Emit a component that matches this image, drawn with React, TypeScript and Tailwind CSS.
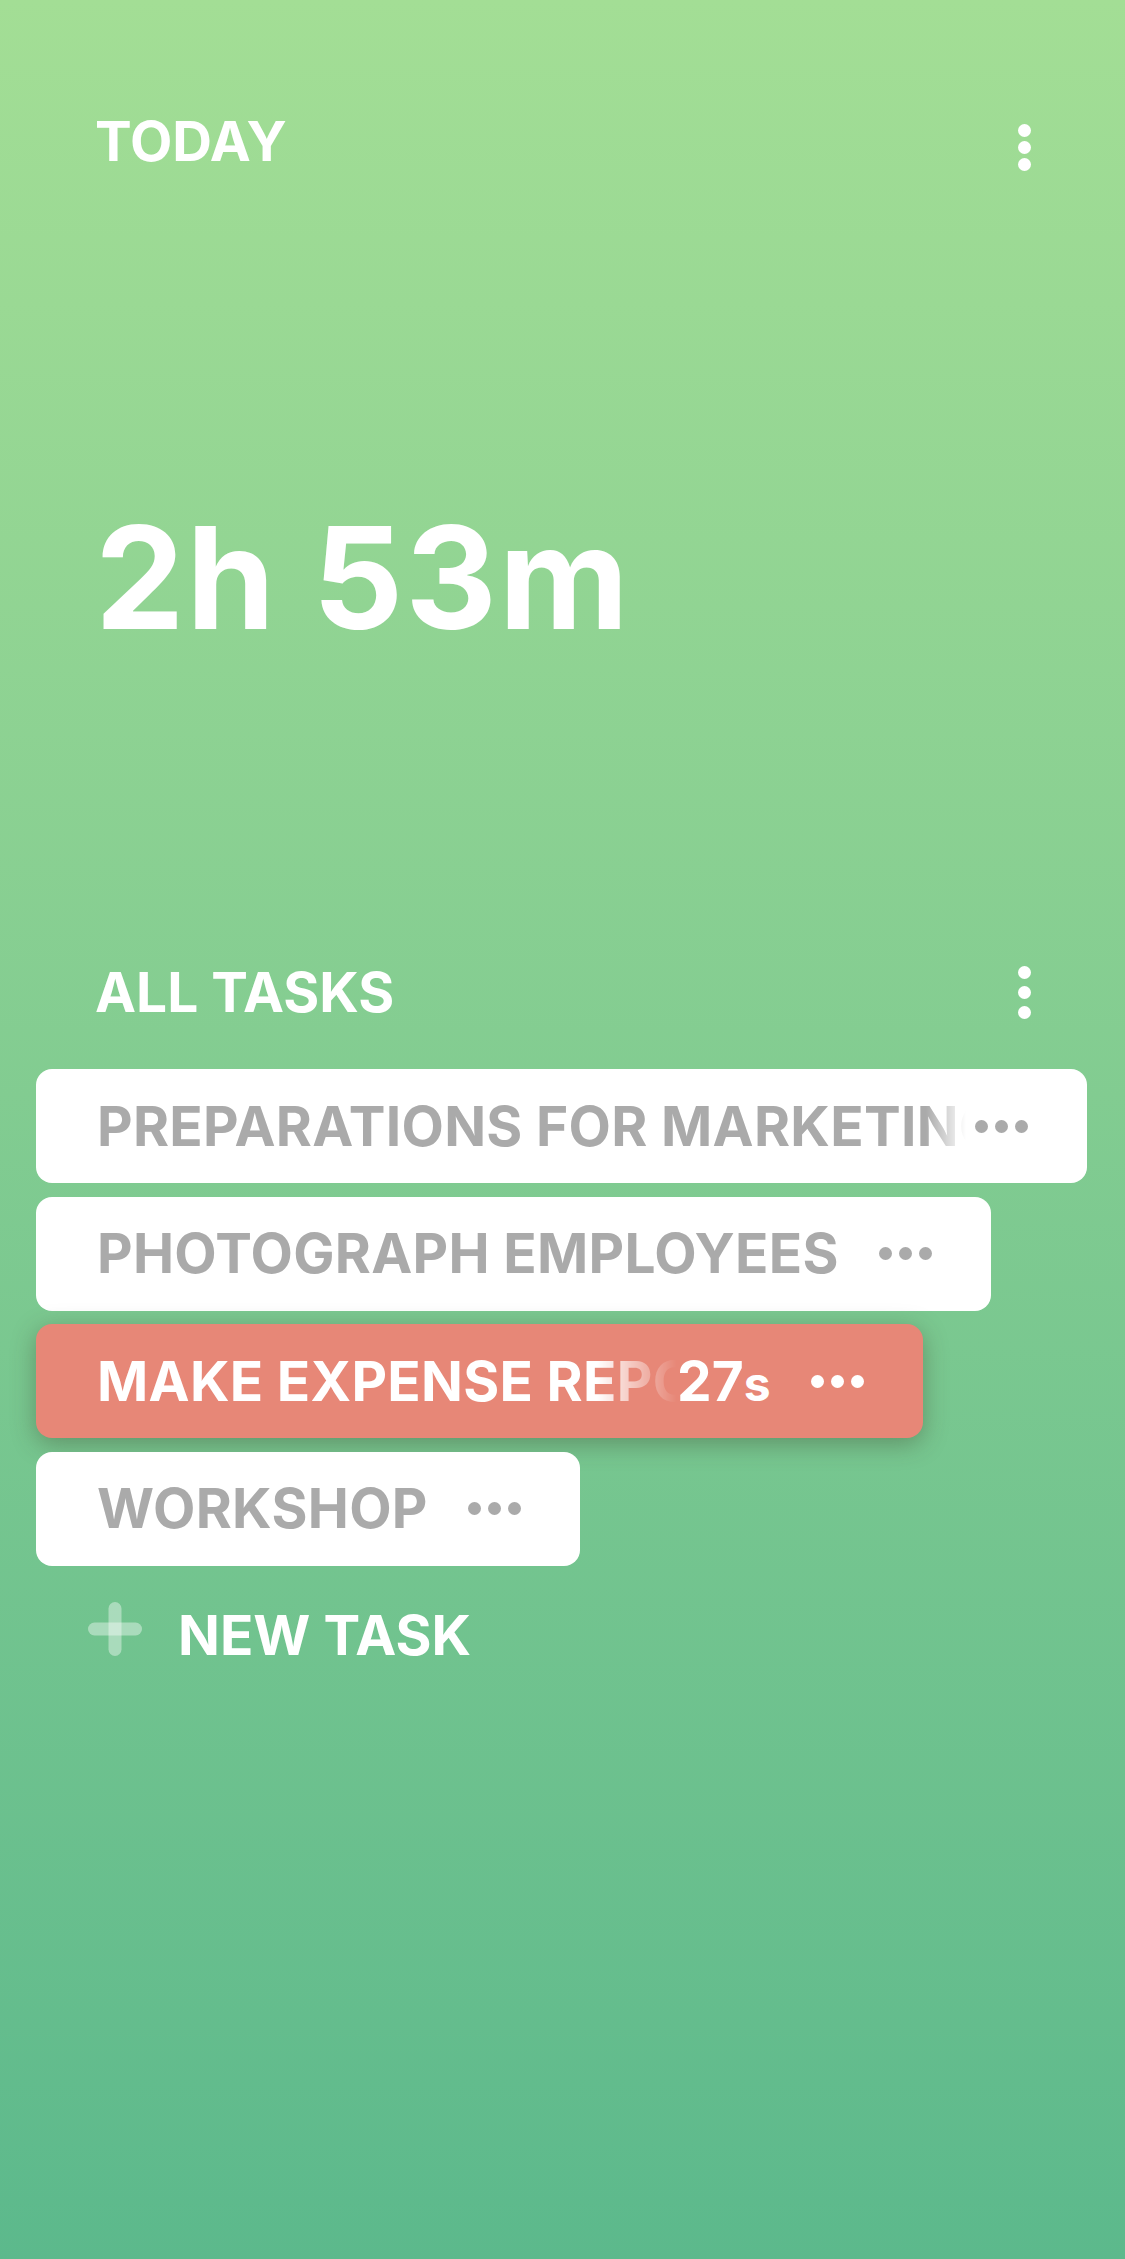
import React from "react"

type Task = {
  id: number
  title: string
  active?: boolean
  timer?: string
  fade?: boolean
  titleWidth?: string
}

const tasks: Task[] = [
  { id: 1, title: "PREPARATIONS FOR MARKETING MATERIALS", fade: true },
  { id: 2, title: "PHOTOGRAPH EMPLOYEES" },
  { id: 3, title: "MAKE EXPENSE REPORT", active: true, timer: "27", fade: true, titleWidth: "w-[580px]" },
  { id: 4, title: "WORKSHOP" },
]

const font = { fontFamily: "Inter, Roboto, 'Liberation Sans', sans-serif" }

function Kebab({ wide }: { wide?: boolean }) {
  return (
    <div className={`flex flex-col items-center ${wide ? "gap-[7px]" : "mt-[10px] gap-[4px]"}`}>
      <span className="block h-[13px] w-[13px] rounded-full bg-white" />
      <span className="block h-[13px] w-[13px] rounded-full bg-white" />
      <span className="block h-[13px] w-[13px] rounded-full bg-white" />
    </div>
  )
}

function Dots({ light }: { light?: boolean }) {
  const c = light ? "bg-white" : "bg-[#aaaaaa]"
  return (
    <div className="flex shrink-0 items-center gap-[7px]">
      <span className={`block h-[13px] w-[13px] rounded-full ${c}`} />
      <span className={`block h-[13px] w-[13px] rounded-full ${c}`} />
      <span className={`block h-[13px] w-[13px] rounded-full ${c}`} />
    </div>
  )
}

function TaskCard({ task }: { task: Task }) {
  return (
    <div
      className={`flex h-[114px] max-w-[1051px] items-center self-start rounded-[16px] pl-[61px] pr-[59px] ${
        task.active ? "bg-[#e78777] shadow-[0_6px_24px_rgba(60,60,40,0.38)]" : "bg-white"
      }`}
    >
      <span
        className={`block min-w-0 overflow-hidden whitespace-nowrap text-[55px] font-bold leading-none tracking-[0.3px] ${
          task.active ? "text-white" : "text-[#aaaaaa]"
        } ${
          task.timer
            ? "[mask-image:linear-gradient(to_right,black_calc(100%-80px),rgba(0,0,0,0.35)_calc(100%-30px),transparent)]"
            : task.fade
              ? "[mask-image:linear-gradient(to_right,black_calc(100%-40px),transparent)]"
              : ""
        } ${task.titleWidth ? `${task.titleWidth} shrink-0` : "shrink"}`}
      >
        {task.title}
      </span>
      {task.timer && (
        <span className="shrink-0 text-[55px] font-bold leading-none text-white">
          {task.timer}
          <span className="text-[48px]">s</span>
        </span>
      )}
      <div className={task.fade && !task.timer ? "ml-[9px]" : "ml-[40px]"}>
        <Dots light={task.active} />
      </div>
    </div>
  )
}

export default function App() {
  return (
    <div
      className="flex min-h-[2259px] w-full flex-col bg-gradient-to-b from-[#a3de95] to-[#5cb98c]"
      style={font}
    >
      {/* Today header */}
      <div className="flex items-start justify-between pl-[95px] pr-[94px] pt-[114px]">
        <h1 className="text-[55px] font-bold leading-none text-white">TODAY</h1>
        <Kebab />
      </div>

      {/* Total time */}
      <div className="pl-[95px] pt-[335px]">
        <p className="text-[142px] font-bold leading-none tracking-[2px] text-white">2h 53m</p>
      </div>

      {/* All tasks header */}
      <div className="flex items-center justify-between pl-[95px] pr-[94px] pt-[317px]">
        <h2 className="text-[55px] font-bold leading-none text-white">ALL TASKS</h2>
        <Kebab wide />
      </div>

      {/* Task list */}
      <div className="flex flex-col gap-[13.5px] px-[36px] pt-[49px]">
        {tasks.map((t) => (
          <TaskCard key={t.id} task={t} />
        ))}
      </div>

      {/* New task */}
      <div className="flex items-center gap-[36px] pl-[88px] pt-[30px]">
        <svg width="54" height="54" viewBox="0 0 54 54" className="shrink-0">
          <line x1="27" y1="6.5" x2="27" y2="47.5" stroke="white" strokeOpacity="0.4" strokeWidth="13" strokeLinecap="round" />
          <line x1="6.5" y1="27" x2="47.5" y2="27" stroke="white" strokeOpacity="0.4" strokeWidth="13" strokeLinecap="round" />
        </svg>
        <span className="pt-[12px] text-[55px] font-bold leading-none text-white">NEW TASK</span>
      </div>
    </div>
  )
}
